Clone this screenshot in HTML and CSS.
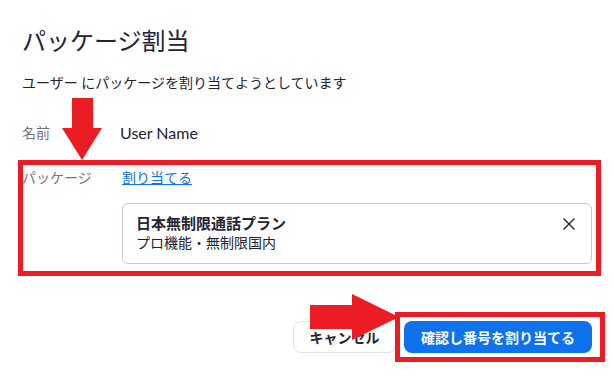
FILE: index.html
```html
<!DOCTYPE html>
<html lang="ja">
<head>
    <meta charset="UTF-8">
    <title>パッケージ割当</title>
    <link rel="stylesheet" href="styles.css">
</head>
<body>
    <div class="dialog">
        <h1 class="title">パッケージ割当</h1>
        <p class="sub">ユーザー にパッケージを割り当てようとしています</p>

        <div class="rows">
            <div class="row">
                <span class="label">名前</span>
                <span class="value name">User Name</span>
            </div>
            <div class="row pkg-row">
                <span class="label">パッケージ</span>
                <div class="value">
                    <a class="link" href="#">割り当てる</a>
                    <div class="card">
                        <div class="card-text">
                            <div class="card-title">日本無制限通話プラン</div>
                            <div class="card-sub">プロ機能・無制限国内</div>
                        </div>
                        <svg class="close" width="14" height="14" viewBox="0 0 14 14">
                            <path d="M1.5 1.5 L12.5 12.5 M12.5 1.5 L1.5 12.5" stroke="#222" stroke-width="1.4" fill="none"/>
                        </svg>
                    </div>
                </div>
            </div>
        </div>

        <div class="actions">
            <button class="btn btn-cancel">キャンセル</button>
            <button class="btn btn-primary">確認し番号を割り当てる</button>
        </div>
    </div>

    <!-- 注釈 -->
    <svg class="marks" width="614" height="377" viewBox="0 0 614 377">
        <rect x="20.5" y="162.5" width="578" height="111" fill="none" stroke="#ec1c24" stroke-width="5"/>
        <rect x="397.5" y="314.5" width="205" height="45" fill="none" stroke="#ec1c24" stroke-width="5"/>
        <polygon points="72,98 93,98 93,128 102,128 82,160 62,128 72,128" fill="#ec1c24"/>
        <polygon points="310,305 352,305 352,294 399,317 352,340 352,329 310,329" fill="#ec1c24"/>
    </svg>
</body>
</html>
```

FILE: styles.css
```css
* {
    margin: 0;
    padding: 0;
    box-sizing: border-box;
}

body {
    background: white;
    font-family: 'Lato', 'Noto Sans CJK JP', sans-serif;
    color: #232333;
    width: 614px;
    height: 377px;
    overflow: hidden;
    position: relative;
}

.dialog {
    padding: 25px 22px 0;
}

.title {
    font-size: 24px;
    line-height: 32px;
    font-weight: normal;
    color: #232333;
}

.sub {
    margin-top: 16px;
    font-size: 14px;
    line-height: 20px;
}

.rows {
    margin-top: 30px;
}

.row {
    display: grid;
    grid-template-columns: 100px 1fr;
    font-size: 14px;
    line-height: 20px;
}

.pkg-row {
    margin-top: 25px;
}

.label {
    color: #6e7680;
}

.name {
    font-size: 16px;
    margin-left: -2px;
}

.link {
    color: #0e72ed;
    text-decoration: underline;
}

.card {
    margin-top: 15px;
    border: 1px solid #c8c6d6;
    border-radius: 6px;
    padding: 9px 14px 10px 13px;
    display: flex;
    justify-content: space-between;
    align-items: flex-start;
}

.card-title {
    font-weight: bold;
    font-size: 15px;
}

.close {
    margin-top: 4px;
    margin-right: 1px;
}

.actions {
    margin-top: 57px;
    display: flex;
    justify-content: flex-end;
    gap: 8px;
}

.btn {
    height: 32px;
    border-radius: 8px;
    font-family: 'Lato', 'Noto Sans CJK JP', sans-serif;
    font-size: 14px;
    font-weight: bold;
    cursor: pointer;
}

.btn-cancel {
    width: 103px;
    background: white;
    border: 1px solid #dfe3e8;
    color: #232333;
}

.btn-primary {
    width: 188px;
    background: #0e72ed;
    border: none;
    color: white;
}

.marks {
    position: absolute;
    top: 0;
    left: 0;
    pointer-events: none;
}
```
